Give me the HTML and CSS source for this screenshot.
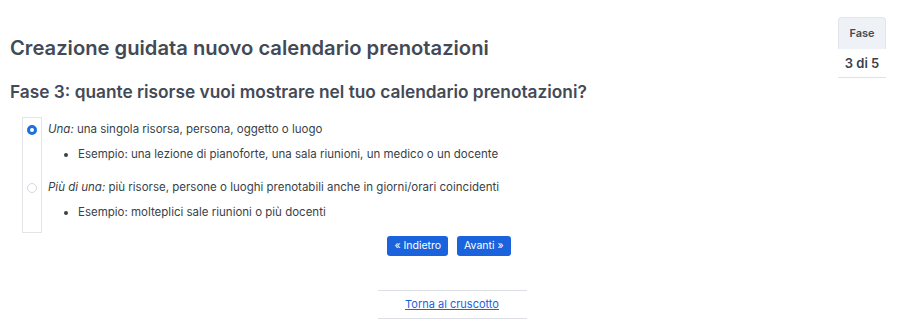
FILE: index.html
```html
<!DOCTYPE html>
<html lang="it">
<head>
    <meta charset="UTF-8">
    <title>Creazione guidata nuovo calendario prenotazioni</title>
    <link rel="stylesheet" href="styles.css">
</head>
<body>
    <div class="page">
        <main class="wizard">
            <h1>Creazione guidata nuovo calendario prenotazioni</h1>
            <h2>Fase 3: quante risorse vuoi mostrare nel tuo calendario prenotazioni?</h2>

            <div class="choices">
                <div class="radio-col">
                    <span class="radio checked"></span>
                    <span class="radio"></span>
                </div>
                <div class="text-col">
                    <div class="choice">
                        <p class="label"><em>Una:</em> una singola risorsa, persona, oggetto o luogo</p>
                        <ul>
                            <li>Esempio: una lezione di pianoforte, una sala riunioni, un medico o un docente</li>
                        </ul>
                    </div>
                    <div class="choice">
                        <p class="label"><em>Più di una:</em> più risorse, persone o luoghi prenotabili anche in giorni/orari coincidenti</p>
                        <ul>
                            <li>Esempio: molteplici sale riunioni o più docenti</li>
                        </ul>
                    </div>
                </div>
            </div>

            <div class="actions">
                <a href="#" class="btn">&laquo; Indietro</a>
                <a href="#" class="btn">Avanti &raquo;</a>
            </div>

            <div class="back-link">
                <a href="#">Torna al cruscotto</a>
            </div>
        </main>

        <aside class="step">
            <div class="step-head">Fase</div>
            <div class="step-value">3 di 5</div>
        </aside>
    </div>
</body>
</html>
```

FILE: styles.css
```css
body {
    font-family: Inter, "Noto Sans", sans-serif;
    background-color: #fff;
    color: #3a3f48;
    margin: 0;
    padding: 0;
}
.page {
    display: flex;
    align-items: flex-start;
}
.wizard {
    flex: 1;
    padding: 36px 0 0 10px;
}
h1 {
    margin: 0;
    font-size: 20.2px;
    line-height: 24px;
    font-weight: 600;
    color: #434a57;
}
h2 {
    margin: 21px 0 0;
    font-size: 17.3px;
    line-height: 22px;
    font-weight: 600;
    color: #434a57;
}
.choices {
    display: flex;
    margin: 14px 0 0 12px;
}
.radio-col {
    width: 20px;
    height: 116px;
    border: 1px solid #e2e4e8;
    display: flex;
    flex-direction: column;
    align-items: center;
    padding-top: 7px;
    gap: 48px;
    box-sizing: border-box;
}
.radio {
    width: 10px;
    height: 10px;
    border-radius: 50%;
    border: 1px solid #d6d9de;
    box-sizing: border-box;
    background-color: #fff;
}
.radio.checked {
    border: 3px solid #1d6fe0;
}
.text-col {
    padding-left: 6px;
    font-size: 11.5px;
    line-height: 16px;
}
.choice p {
    margin: 4px 0 0;
}
.choice ul {
    margin: 9px 0 0;
    padding-left: 30px;
}
.choice + .choice {
    margin-top: 17px;
}
.actions {
    display: flex;
    justify-content: center;
    gap: 9px;
    margin-top: 3px;
    padding-left: 50px;
}
.btn {
    display: inline-block;
    background-color: #1b63dc;
    color: #fff;
    padding: 2px 7px;
    border-radius: 3px;
    font-size: 10.5px;
    line-height: 16px;
    text-decoration: none;
}
.back-link {
    width: 149px;
    margin: 34px auto 0;
    padding: 6px 0;
    border-top: 1px solid #dcdfe3;
    border-bottom: 1px solid #dcdfe3;
    text-align: center;
    font-size: 11px;
    line-height: 15px;
    position: relative;
    left: 28px;
}
.back-link a {
    color: #1b63dc;
}
.step {
    width: 48px;
    margin: 17px 14px 0 0;
    text-align: center;
    font-weight: 600;
}
.step-head {
    background-color: #eef1f6;
    border: 1px solid #e2e5ea;
    border-bottom: none;
    border-radius: 4px 4px 0 0;
    font-size: 11px;
    line-height: 31px;
    color: #434a57;
}
.step-value {
    font-size: 13px;
    line-height: 28px;
    border-bottom: 1px solid #dfe2e6;
    color: #3a3f48;
}
```
